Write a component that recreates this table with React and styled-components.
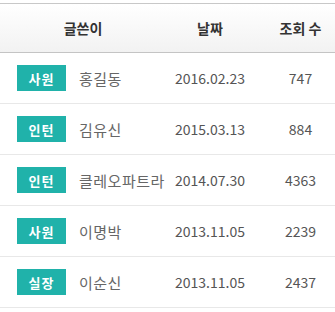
import React from 'react'
import styled, { createGlobalStyle } from 'styled-components'

const GlobalStyle = createGlobalStyle`
  body {
    margin: 0;
    background: #fff;
    font-family: "Noto Sans CJK KR", "Noto Sans", sans-serif;
  }
`

const Board = styled.div`
  margin-top: 3px;
  border-top: 1px solid #c8c8c8;
  width: 100%;
`

const Row = styled.div`
  display: grid;
  grid-template-columns: 166px 88px 1fr;
  align-items: center;
  height: ${p => (p.$head ? '48px' : '50px')};
  border-bottom: 1px solid ${p => (p.$head ? '#c4c4c4' : '#e8e8e8')};
  background: ${p => (p.$head ? 'linear-gradient(#ffffff, #f2f2f2)' : '#fff')};
`

const HeadCell = styled.div`
  text-align: center;
  font-size: 14px;
  font-weight: 700;
  color: #333;
  padding-left: ${p => p.$shift || 0}px;
`

const WriterCell = styled.div`
  display: flex;
  align-items: center;
  gap: 13px;
  padding-left: 17px;
`

const Badge = styled.span`
  display: inline-flex;
  align-items: center;
  justify-content: center;
  width: 49px;
  height: 26px;
  background: #20b2aa;
  color: #fff;
  font-size: 13px;
  font-weight: 700;
  letter-spacing: 1px;
`

const Name = styled.span`
  font-size: 15px;
  color: #666;
  letter-spacing: 0.5px;
`

const Cell = styled.div`
  text-align: center;
  font-size: 14px;
  color: #555;
  padding-left: ${p => p.$shift || 0}px;
`

const posts = [
  { rank: '사원', name: '홍길동', date: '2016.02.23', views: 747 },
  { rank: '인턴', name: '김유신', date: '2015.03.13', views: 884 },
  { rank: '인턴', name: '클레오파트라', date: '2014.07.30', views: 4363 },
  { rank: '사원', name: '이명박', date: '2013.11.05', views: 2239 },
  { rank: '실장', name: '이순신', date: '2013.11.05', views: 2437 },
]

export default function App() {
  return (
    <>
      <GlobalStyle />
      <Board>
        <Row $head>
          <HeadCell>글쓴이</HeadCell>
          <HeadCell>날짜</HeadCell>
          <HeadCell $shift={12}>조회 수</HeadCell>
        </Row>
        {posts.map((p, i) => (
          <Row key={i}>
            <WriterCell>
              <Badge>{p.rank}</Badge>
              <Name>{p.name}</Name>
            </WriterCell>
            <Cell>{p.date}</Cell>
            <Cell $shift={12}>{p.views}</Cell>
          </Row>
        ))}
      </Board>
    </>
  )
}
